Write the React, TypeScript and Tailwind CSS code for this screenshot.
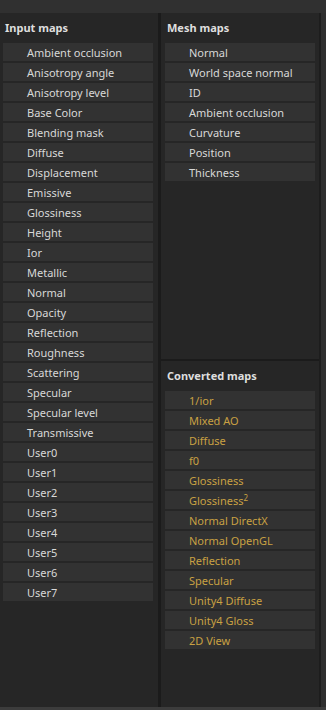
import React from "react";

const inputMaps = [
  "Ambient occlusion","Anisotropy angle","Anisotropy level","Base Color","Blending mask","Diffuse","Displacement","Emissive","Glossiness","Height","Ior","Metallic","Normal","Opacity","Reflection","Roughness","Scattering","Specular","Specular level","Transmissive","User0","User1","User2","User3","User4","User5","User6","User7",
];
const meshMaps = ["Normal","World space normal","ID","Ambient occlusion","Curvature","Position","Thickness"];
const converted: React.ReactNode[] = [
  "1/ior","Mixed AO","Diffuse","f0","Glossiness",<>Glossiness<span className="text-[8px] relative -top-[4px]">2</span></>,"Normal DirectX","Normal OpenGL","Reflection","Specular","Unity4 Diffuse","Unity4 Gloss","2D View",
];

function Item({ children, gold }: { children: React.ReactNode; gold?: boolean }) {
  return (
    <div className={`h-[18px] w-[150px] bg-[#323232] pl-[24px] flex items-center text-[11px] leading-none ${gold ? "text-[#c9a143]" : "text-[#d8d8d8]"}`}>
      <span>{children}</span>
    </div>
  );
}

function Header({ children, left }: { children: React.ReactNode; left: string }) {
  return (
    <div className={`h-[30px] flex items-center ${left} text-[11px] font-bold text-[#dedede]`}>
      {children}
    </div>
  );
}

export default function App() {
  return (
    <div className="w-[326px] h-[710px] bg-[#2e2e2e] flex flex-col overflow-hidden" style={{ fontFamily: '"Noto Sans", "DejaVu Sans", sans-serif' }}>
      <div className="h-[13px] bg-[#303030]" />
      <div className="flex-1 flex min-h-0">
        <div className="w-[158px] bg-[#262626] flex flex-col">
          <Header left="pl-[5px]">Input maps</Header>
          <div className="flex flex-col gap-[2px] pl-[3px]">
            {inputMaps.map((m) => (
              <Item key={m}>{m}</Item>
            ))}
          </div>
        </div>
        <div className="w-[3px] bg-[#1b1b1b]" />
        <div className="w-[158px] flex flex-col">
          <div className="h-[346px] bg-[#262626] flex flex-col">
            <Header left="pl-[6px]">Mesh maps</Header>
            <div className="flex flex-col gap-[2px] pl-[4px]">
              {meshMaps.map((m) => (
                <Item key={m}>{m}</Item>
              ))}
            </div>
          </div>
          <div className="h-[2px] bg-[#1b1b1b]" />
          <div className="flex-1 bg-[#262626] flex flex-col">
            <Header left="pl-[6px]">Converted maps</Header>
            <div className="flex flex-col gap-[2px] pl-[4px]">
              {converted.map((m, i) => (
                <Item key={i} gold>{m}</Item>
              ))}
            </div>
          </div>
        </div>
        <div className="w-[2px] bg-[#1d1d1d]" />
        <div className="flex-1 bg-[#2e2e2e]" />
      </div>
      <div className="h-[3px] bg-[#3c3c3c]" />
    </div>
  );
}
